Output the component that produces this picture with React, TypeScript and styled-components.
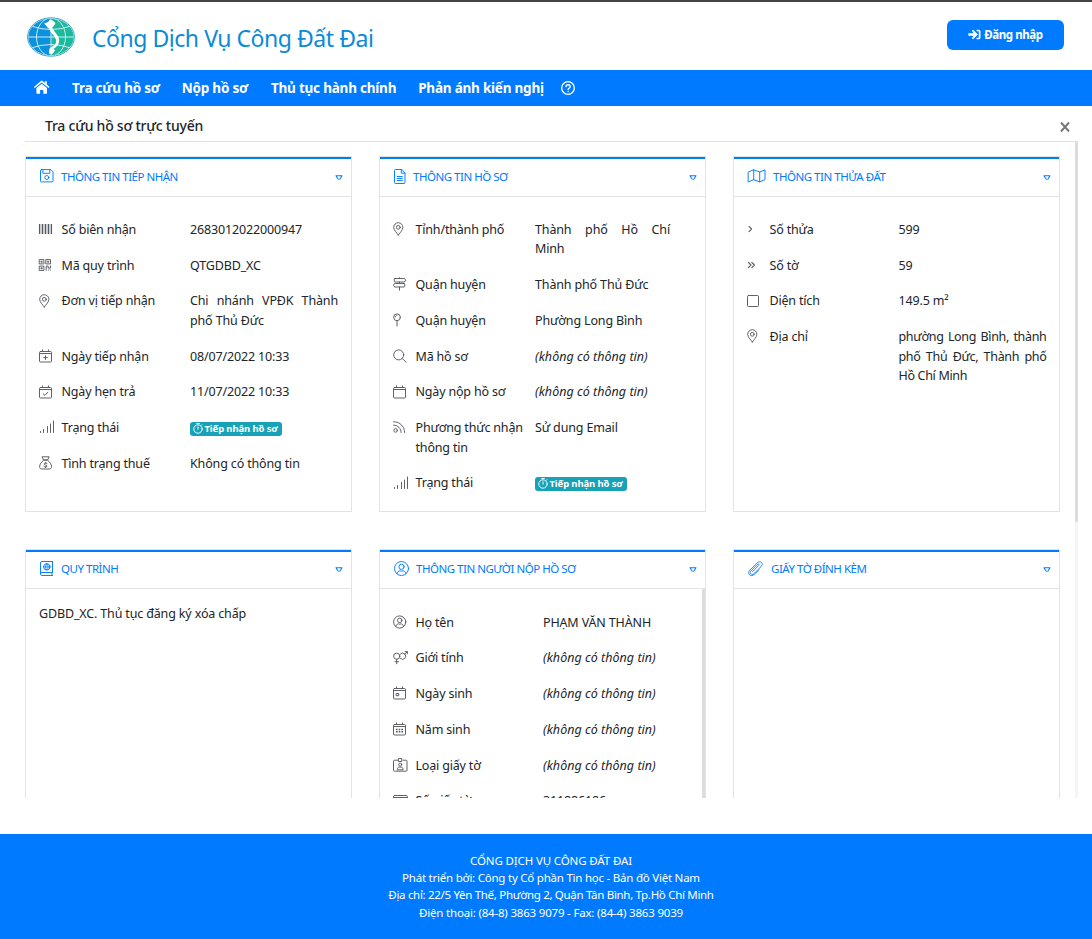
import React from "react";
import styled, { createGlobalStyle, css } from "styled-components";

const BLUE = "#007bff";
const LINE = "#e1e3e5";

const GlobalStyle = createGlobalStyle`
  *, *::before, *::after { box-sizing: border-box; }
  body {
    margin: 0;
    background: #fff;
    color: #212529;
    font-family: "Noto Sans", "Open Sans", sans-serif;
    font-size: 12.5px;
    letter-spacing: -0.15px;
  }
`;

/* ---------- page frame ---------- */

const Page = styled.div`
  display: flex;
  flex-direction: column;
  width: 1092px;
  height: 939px;
  overflow: hidden;
  border-top: 2px solid #444;
`;

const Header = styled.header`
  display: flex;
  align-items: center;
  height: 68px;
  flex: none;
  padding: 2px 28px 0 27px;
`;

const Brand = styled.h1`
  margin: 1px 0 0 17px;
  color: #0a8ad8;
  font-size: 23px;
  font-weight: 400;
  line-height: 30px;
  letter-spacing: -0.46px;
`;

const LoginButton = styled.button`
  display: flex;
  align-items: center;
  justify-content: center;
  gap: 3px;
  width: 117px;
  height: 30px;
  margin: 0 0 4px auto;
  padding: 0 0 1px;
  border: 0;
  border-radius: 6px;
  background: ${BLUE};
  color: #fff;
  font: 700 11.5px "Noto Sans", sans-serif;
  letter-spacing: -0.42px;
`;

const Nav = styled.nav`
  display: flex;
  align-items: center;
  height: 36px;
  flex: none;
  padding-left: 33px;
  background: ${BLUE};
  color: #fff;
`;

const NavLink = styled.a<{ $gap: number }>`
  margin-left: ${(p) => p.$gap}px;
  font-size: 13.5px;
  font-weight: 700;
  line-height: 36px;
  letter-spacing: -0.22px;
  white-space: nowrap;
`;

const Main = styled.main`
  display: flex;
  flex-direction: column;
  height: 728px;
  flex: none;
  padding: 0 14px 36px 25px;
`;

const TitleBar = styled.div`
  display: flex;
  align-items: center;
  justify-content: space-between;
  height: 36px;
  flex: none;
  padding: 5px 8px 0 20px;
  border-bottom: 1px solid #dfe1e3;
`;

const PageTitle = styled.h2`
  margin: 0;
  font-size: 14px;
  font-weight: 500;
  line-height: 20px;
  letter-spacing: -0.24px;
`;

const CloseButton = styled.span`
  display: flex;
  color: #777;
  padding-top: 1px;
`;

const Scroller = styled.div`
  display: flex;
  flex: 1;
  min-height: 0;
  overflow: hidden;
`;

const CardGrid = styled.div`
  display: grid;
  grid-template-columns: repeat(3, 327px);
  grid-template-rows: 356px 356px;
  gap: 37px 27px;
  padding-top: 14px;
`;

const Track = styled.div<{ $thumb: string }>`
  width: 3px;
  height: 100%;
  margin-left: auto;
  background: #f5f5f5;
  &::before {
    content: "";
    display: block;
    height: ${(p) => p.$thumb};
    background: #dcdcdc;
    border-radius: 1px;
  }
`;

const Footer = styled.footer`
  display: flex;
  flex-direction: column;
  align-items: center;
  height: 105px;
  flex: none;
  padding: 17.6px 0 0 10px;
  background: ${BLUE};
  color: #fff;
`;

const FooterLine = styled.p<{ $track: number }>`
  margin: 0;
  font-size: 11.5px;
  line-height: 17.4px;
  letter-spacing: ${(p) => p.$track}px;
`;

/* ---------- cards ---------- */

const Card = styled.section`
  display: flex;
  flex-direction: column;
  border: 1px solid ${LINE};
  overflow: hidden;
`;

const CardHeader = styled.header<{ $height: number }>`
  display: flex;
  align-items: center;
  height: ${(p) => p.$height}px;
  flex: none;
  padding: 0 8px ${(p) => (p.$height < 40 ? 4 : 3)}px 14px;
  border-top: 2px solid ${BLUE};
  border-bottom: 1px solid ${LINE};
  color: ${BLUE};
`;

const CardTitle = styled.h3<{ $gap: number }>`
  margin: 2px auto 0 ${(p) => p.$gap}px;
  font-size: 11.5px;
  font-weight: 400;
  line-height: 18px;
  letter-spacing: -0.48px;
  white-space: nowrap;
`;

const Toggle = styled.span`
  display: flex;
  padding-top: 3px;
`;

const CardBody = styled.div`
  display: flex;
  flex: 1;
  min-height: 0;
`;

const Note = styled.p`
  margin: 15px 13px;
  line-height: 19.5px;
`;

const FieldList = styled.dl<{ $top: number; $label: number; $value: number }>`
  display: grid;
  grid-template-columns: 22.5px ${(p) => p.$label}px ${(p) => p.$value}px;
  row-gap: 16.25px;
  align-content: start;
  margin: 0;
  padding: ${(p) => p.$top}px 0 0 13px;
  line-height: 19.5px;
`;

const IconCell = styled.span`
  display: flex;
  align-items: center;
  height: 18.5px;
  color: #555b61;
`;

const Label = styled.dt`
  padding-right: 8px;
  letter-spacing: -0.18px;
`;

const Value = styled.dd<{ $empty?: boolean; $tight?: boolean }>`
  margin: 0;
  text-align: justify;
  ${(p) =>
    p.$tight &&
    css`
      letter-spacing: -0.32px;
    `}
  ${(p) =>
    p.$empty &&
    css`
      font-style: italic;
      letter-spacing: 0.03px;
    `}
`;

const Badge = styled.span`
  display: inline-flex;
  align-items: center;
  gap: 1.5px;
  width: 92px;
  height: 14px;
  margin-top: 3.5px;
  padding: 0 0 0 3px;
  border-radius: 3px;
  background: #17a2b8;
  color: #fff;
  font-size: 9.5px;
  font-weight: 700;
  line-height: 14px;
  letter-spacing: -0.12px;
  white-space: nowrap;
  vertical-align: top;
`;

/* ---------- icons ---------- */

const Glyph = styled.svg`
  display: block;
  flex: none;
  overflow: visible;
  fill: none;
  stroke: currentColor;
  stroke-width: 0.95;
  stroke-linecap: round;
  stroke-linejoin: round;
`;

const calendarFrame = (
  <path d="M1.5 2.5h10a1 1 0 0 1 1 1v8.500a1 1 0 0 1-1 1h-10a1 1 0 0 1-1-1V3.500a1 1 0 0 1 1-1zM.5 4.500h12M3.500.9v1.600M9.500.9v1.600" />
);

const drawings: Record<string, React.ReactNode> = {
  barcode: (
    <>
      <path
        d="M.5 2v10M3.500 2v10M6.500 2v10M9.500 2v10M12.500 2v10"
        strokeLinecap="butt"
        strokeWidth="1.100"
      />
      <path d="M2 2v10M5 2v10M8 2v10M11 2v10" strokeLinecap="butt" opacity=".55" />
    </>
  ),
  qr: (
    <>
      <path d="M.6 1.600h4.300v4.300H.6zM7.200 1.600h4.300v4.300H7.200zM.6 8.100h4.300v4.300H.6zM7.200 12.400V8.100h2v2h2.300V8" />
      <path d="M2.300 3.300h.9v.9h-.9zM8.900 3.300h.9v.9h-.9zM2.300 9.800h.9v.9h-.9zM9.500 12h.3M11.500 12h.1" />
    </>
  ),
  pin: (
    <>
      <path d="M5.300 13C4.500 11.500.7 8.300.7 5.300a4.600 4.600 0 0 1 9.200 0c0 3-3.800 6.200-4.600 7.700z" />
      <circle cx="5.300" cy="5.300" r="1.900" />
    </>
  ),
  calPlus: (
    <>
      {calendarFrame}
      <path d="M6.500 6.700v3.800M4.600 8.600h3.800" />
    </>
  ),
  calCheck: (
    <>
      {calendarFrame}
      <path d="M4.200 8.800l1.700 1.600 3-3.200" />
    </>
  ),
  calendar: calendarFrame,
  calDay: (
    <>
      {calendarFrame}
      <path d="M3.500 7.500h2.200v2.200H3.500z" />
    </>
  ),
  calGrid: (
    <>
      {calendarFrame}
      <path
        d="M3 7.500h1.600M5.700 7.500h1.600M8.400 7.500H10M3 9.800h1.600M5.700 9.800h1.600M8.400 9.800H10"
        strokeWidth="1.500"
        strokeLinecap="butt"
      />
    </>
  ),
  signal: (
    <path d="M1.500 12.500v-1M4.500 12.500v-3M8.500 12.500v-6M11.500 12.500V4M14.500 12.500V1" />
  ),
  moneyBag: (
    <>
      <path d="M4.400 3.600 3 .8h7.200L8.800 3.600zM4.400 4.400C2.500 6 .6 8.300.6 10.700c0 1.400.8 2.300 2.200 2.300h7.600c1.400 0 2.200-.9 2.200-2.300 0-2.400-1.900-4.700-3.800-6.300z" />
      <path d="M8 7.500c-1.100-.7-2.800-.4-2.800.6 0 1.300 2.900.7 2.900 2 0 1-1.800 1.200-3 .5M6.600 6.500v.6M6.600 11v.6" />
    </>
  ),
  signs: (
    <path d="M6.500.7v.8M6.500 5v1.500M6.500 10v3.200M2 1.500h9.500l1.200 1.700L11.500 5H2a.7.7 0 0 1-.7-.7V2.200a.7.7 0 0 1 .7-.7zM11 6.500H1.600L.5 8.200 1.600 10H11a.7.7 0 0 0 .7-.7V7.200a.7.7 0 0 0-.7-.7z" />
  ),
  mapPin: (
    <>
      <circle cx="4" cy="4.300" r="3.400" />
      <path d="M4 7.700V13M2.200 4.100c0-.9.700-1.600 1.600-1.600" />
    </>
  ),
  search: (
    <>
      <circle cx="5.700" cy="5.900" r="5" />
      <path d="M9.400 9.600 13 13.200" />
    </>
  ),
  rss: (
    <>
      <path d="M.6 1.700c6.300 0 11 4.700 11 10.800M.6 5.100c4.200 0 7.500 3.200 7.500 7.400" />
      <circle cx="2.600" cy="10.400" r="1.800" />
    </>
  ),
  angle: <path d="M2 4.400 4.600 7 2 9.600" strokeWidth="1.100" />,
  angles: <path d="M1.400 4.400 4 7 1.400 9.600M4.800 4.400 7.400 7 4.800 9.600" strokeWidth="1.100" />,
  square: <rect x=".5" y="1.500" width="11" height="11" rx="1" />,
  user: (
    <>
      <circle cx="6.700" cy="7" r="6.100" />
      <circle cx="6.700" cy="5.400" r="2.200" />
      <path d="M2.800 11.400c.4-1.700 1.500-2.500 2.700-2.500.8.300 1.600.3 2.400 0 1.200 0 2.300.8 2.700 2.500" />
    </>
  ),
  userLarge: (
    <>
      <circle cx="7.500" cy="7.500" r="7" />
      <circle cx="7.500" cy="5.800" r="2.600" />
      <path d="M3 12.700c.4-2 1.700-2.900 3.100-2.900.9.300 1.900.3 2.800 0 1.400 0 2.700.9 3.100 2.900" />
    </>
  ),
  gender: (
    <>
      <circle cx="3.700" cy="5.200" r="3.100" />
      <path d="M3.700 8.300v4.500M1.900 10.700h3.600M11.600 3.300 14.200.8M12.200.6h2.200v2.200" />
      <path d="M7.300 3.100a3.100 3.100 0 1 1 0 4.200" />
    </>
  ),
  idBadge: (
    <>
      <path d="M4.500 2.200H1.500a1 1 0 0 0-1 1v9a1 1 0 0 0 1 1h11.500a1 1 0 0 0 1-1v-9a1 1 0 0 0-1-1h-3M5.800.5h2.900v3H5.800z" />
      <circle cx="7.200" cy="6.600" r="1.500" />
      <path d="M4.300 11.400c0-1.600 1-2.300 2-2.300h1.800c1 0 2 .7 2 2.300z" />
    </>
  ),
  idCard: (
    <path d="M1.500 1.500h11.800a1 1 0 0 1 1 1v9a1 1 0 0 1-1 1H1.500a1 1 0 0 1-1-1v-9a1 1 0 0 1 1-1zM.5 3.500h13.800" />
  ),
  save: (
    <>
      <path d="M1.500.6h9.300l2.200 2.200v9.100a1 1 0 0 1-1 1H1.500a1 1 0 0 1-1-1V1.600a1 1 0 0 1 1-1zM2.900.8v3.500h6.900V.8" />
      <circle cx="6.800" cy="8.500" r="2" />
    </>
  ),
  file: (
    <path d="M7.300.5H1.500a1 1 0 0 0-1 1v12a1 1 0 0 0 1 1h8.500a1 1 0 0 0 1-1V4.200zM7.300.5v3.700H11M3.200 7.500h5.100M3.200 9.500h5.100M3.200 11.500h5.100" />
  ),
  map: (
    <path d="M.5 3 5.700.8l6 2.200L17 .9v9.700l-5.300 2.300-6-2.200L.5 12.800zM5.700.8v9.900M11.700 3v9.900" />
  ),
  atlas: (
    <>
      <path d="M12.500.5H2A1.500 1.500 0 0 0 .5 2v10.500A1.500 1.500 0 0 0 2 14.500h10.500M12.500.5v11H2A1.500 1.500 0 0 0 .5 12.800M12 11.500v3" />
      <circle cx="6.800" cy="5.900" r="3.200" />
      <path d="M3.600 5.900H10M6.800 2.700c-1.700 1.900-1.700 4.500 0 6.400 1.700-1.900 1.700-4.500 0-6.400z" strokeWidth=".8" />
    </>
  ),
  clip: (
    <path d="M4.600 10.600 10.600 4.500c1-.9 0-2.200-1-1.200L3 9.900c-2.200 2.300.6 5 2.900 2.800l7.100-7c3.200-3.200-.7-7-4-3.700L2 8.900c-3.600 3.700.7 8 4.600 4.300l4.500-4.400" strokeWidth=".85" />
  ),
  caret: <path d="M1 .7h6L5.200 3.700a1.500 1.500 0 0 1-2.400 0z" strokeWidth="1.050" />,
  timer: (
    <>
      <circle cx="5" cy="6" r="4.200" />
      <path d="M5 3.800V6.300M3.700.5h2.600M8.300 2.300l.5-.5" />
    </>
  ),
  help: (
    <>
      <circle cx="7" cy="7" r="6.300" strokeWidth="1.300" />
      <path d="M5 5.600c.1-2.600 4.200-2.300 4.100.1 0 1.500-2 1.500-2 2.800M7.100 10.400v.1" strokeWidth="1.400" />
    </>
  ),
  close: <path d="M1 .5 9 9.500M9 .5 1 9.500" strokeWidth="1.900" strokeLinecap="butt" />,
};

function Icon({ name, w = 14, h = 14 }: { name: string; w?: number; h?: number }) {
  return (
    <Glyph width={w} height={h} viewBox={`0 0 ${w} ${h}`} aria-hidden>
      {drawings[name]}
    </Glyph>
  );
}

function HomeIcon() {
  return (
    <svg width="17" height="16" viewBox="0 0 17 16" fill="#fff" aria-hidden>
      <path d="M8.200.7a.9.900 0 0 1 1 0l2.600 2.200V1.200h2v3.400l2.700 2.300-.9 1.100-6.900-5.600-6.900 5.600-.9-1.100z" />
      <path d="M8.700 3.800 14 8.100v5a.6.600 0 0 1-.6.600H10.300V9.900H7.100v3.800H4a.6.600 0 0 1-.6-.6v-5z" />
    </svg>
  );
}

function LoginIcon() {
  return (
    <svg width="13" height="11" viewBox="0 0 13 11" fill="#fff" aria-hidden>
      <path d="M5.100.7 9.900 5.500 5.100 10.300 3.800 9.200 5.500 6.700H.4V4.300h5.100L3.800 1.800z" />
      <path d="M8.600.7h2a1.900 1.900 0 0 1 1.900 1.900v5.800a1.900 1.900 0 0 1-1.900 1.900h-2V8.700h1.700a.5.500 0 0 0 .5-.5V2.800a.5.500 0 0 0-.5-.5H8.600z" />
    </svg>
  );
}

function Logo() {
  return (
    <svg width="48" height="40" viewBox="0 0 48 40" aria-hidden>
      <defs>
        <clipPath id="globe">
          <ellipse cx="24" cy="20" rx="22.700" ry="18.500" />
        </clipPath>
      </defs>
      <ellipse cx="24" cy="20" rx="23.400" ry="19.200" fill="#fff" stroke="#3aa0d4" strokeWidth="1" />
      <g clipPath="url(#globe)">
        <rect width="25" height="40" fill="#0b92dc" />
        <rect x="25" width="23" height="40" fill="#1cba9c" />
        <g fill="none" stroke="#dff6fb" strokeWidth=".9">
          <ellipse cx="24" cy="20" rx="14.500" ry="19" />
          <path d="M24 0v40M0 20h48M4 9q20 7 40 0M4 31q20-7 40 0" />
        </g>
        <path
          d="M17 6.500 21 5l2-2.500 3 1.300L28.500 6l-1 2-2.200 2.500c.6 3 5.500 6.500 6.700 11.500.8 4.500-1.700 7.500-5 9.500l-3.700 3.500-.8-3.500 3.500-2.500c2.500-1 3.500-3.500 3-6.500C27.500 18 23 15.500 22.500 12l-2-1.500-1.500-2z"
          fill="#fff"
        />
        <path d="M22 32.500 27 32l1 1.500-3 4-3-1z" fill="#fff" />
      </g>
    </svg>
  );
}

/* ---------- content ---------- */

type Field = { icon: string; label: string; value?: string; status?: boolean; tight?: boolean };

const receipt: Field[] = [
  { icon: "barcode", label: "Số biên nhận", value: "2683012022000947" },
  { icon: "qr", label: "Mã quy trình", value: "QTGDBD_XC" },
  { icon: "pin", label: "Đơn vị tiếp nhận", value: "Chi nhánh VPĐK Thành phố Thủ Đức" },
  { icon: "calPlus", label: "Ngày tiếp nhận", value: "08/07/2022 10:33" },
  { icon: "calCheck", label: "Ngày hẹn trả", value: "11/07/2022 10:33" },
  { icon: "signal", label: "Trạng thái", status: true },
  { icon: "moneyBag", label: "Tình trạng thuế", value: "Không có thông tin" },
];

const dossier: Field[] = [
  { icon: "pin", label: "Tỉnh/thành phố", value: "Thành phố Hồ Chí Minh" },
  { icon: "signs", label: "Quận huyện", value: "Thành phố Thủ Đức" },
  { icon: "mapPin", label: "Quận huyện", value: "Phường Long Bình" },
  { icon: "search", label: "Mã hồ sơ" },
  { icon: "calendar", label: "Ngày nộp hồ sơ" },
  { icon: "rss", label: "Phương thức nhận thông tin", value: "Sử dung Email" },
  { icon: "signal", label: "Trạng thái", status: true },
];

const parcel: Field[] = [
  { icon: "angle", label: "Số thửa", value: "599" },
  { icon: "angles", label: "Số tờ", value: "59" },
  { icon: "square", label: "Diện tích", value: "149.5 m²" },
  {
    icon: "pin",
    label: "Địa chỉ",
    value: "phường Long Bình, thành phố Thủ Đức, Thành phố Hồ Chí Minh",
    tight: true,
  },
];

const applicant: Field[] = [
  { icon: "user", label: "Họ tên", value: "PHẠM VĂN THÀNH" },
  { icon: "gender", label: "Giới tính" },
  { icon: "calDay", label: "Ngày sinh" },
  { icon: "calGrid", label: "Năm sinh" },
  { icon: "idBadge", label: "Loại giấy tờ" },
  { icon: "idCard", label: "Số giấy tờ", value: "311886186" },
];

function Fields({
  items,
  label,
  value,
  top = 22.75,
}: {
  items: Field[];
  label: number;
  value: number;
  top?: number;
}) {
  return (
    <FieldList $top={top} $label={label} $value={value}>
      {items.map((f, i) => (
        <React.Fragment key={i}>
          <IconCell>
            <Icon name={f.icon} />
          </IconCell>
          <Label>{f.label}</Label>
          {f.status ? (
            <Value>
              <Badge>
                <Icon name="timer" w={10} h={11} />
                Tiếp nhận hồ sơ
              </Badge>
            </Value>
          ) : (
            <Value $empty={!f.value} $tight={f.tight}>
              {f.value ?? "(không có thông tin)"}
            </Value>
          )}
        </React.Fragment>
      ))}
    </FieldList>
  );
}

function Panel({
  icon,
  iconW = 14,
  iconH = 14,
  gap = 7,
  title,
  height = 40,
  children,
}: {
  icon: string;
  iconW?: number;
  iconH?: number;
  gap?: number;
  title: string;
  height?: number;
  children?: React.ReactNode;
}) {
  return (
    <Card>
      <CardHeader $height={height}>
        <Icon name={icon} w={iconW} h={iconH} />
        <CardTitle $gap={gap}>{title}</CardTitle>
        <Toggle>
          <Icon name="caret" w={8} h={5} />
        </Toggle>
      </CardHeader>
      <CardBody>{children}</CardBody>
    </Card>
  );
}

export default function App() {
  return (
    <>
      <GlobalStyle />
      <Page>
        <Header>
          <Logo />
          <Brand>Cổng Dịch Vụ Công Đất Đai</Brand>
          <LoginButton>
            <LoginIcon />
            Đăng nhập
          </LoginButton>
        </Header>
        <Nav>
          <HomeIcon />
          <NavLink $gap={22}>Tra cứu hồ sơ</NavLink>
          <NavLink $gap={22}>Nộp hồ sơ</NavLink>
          <NavLink $gap={23}>Thủ tục hành chính</NavLink>
          <NavLink $gap={22}>Phản ánh kiến nghị</NavLink>
          <NavLink $gap={17.5}>
            <Icon name="help" />
          </NavLink>
        </Nav>
        <Main>
          <TitleBar>
            <PageTitle>Tra cứu hồ sơ trực tuyến</PageTitle>
            <CloseButton>
              <Icon name="close" w={10} h={10} />
            </CloseButton>
          </TitleBar>
          <Scroller>
            <CardGrid>
              <Panel icon="save" title="THÔNG TIN TIẾP NHẬN">
                <Fields items={receipt} label={128.500} value={148} />
              </Panel>
              <Panel icon="file" iconW={12} iconH={15} title="THÔNG TIN HỒ SƠ">
                <Fields items={dossier} label={119.500} value={135} />
              </Panel>
              <Panel icon="map" iconW={18} title="THÔNG TIN THỬA ĐẤT">
                <Fields items={parcel} label={129} value={148} />
              </Panel>
              <Panel icon="atlas" iconH={15} height={39} title="QUY TRÌNH">
                <Note>GDBD_XC. Thủ tục đăng ký xóa chấp</Note>
              </Panel>
              <Panel icon="userLarge" iconW={15} iconH={15} height={39} title="THÔNG TIN NGƯỜI NỘP HỒ SƠ">
                <Fields items={applicant} label={127.500} value={130} top={23.500} />
                <Track $thumb="100%" />
              </Panel>
              <Panel icon="clip" iconW={15} iconH={15} gap={8} height={39} title="GIẤY TỜ ĐÍNH KÈM" />
            </CardGrid>
            <Track $thumb="380px" />
          </Scroller>
        </Main>
        <Footer>
          <FooterLine $track={-0.13}>CỔNG DỊCH VỤ CÔNG ĐẤT ĐAI</FooterLine>
          <FooterLine $track={-0.23}>Phát triển bởi: Công ty Cổ phần Tin học - Bản đồ Việt Nam</FooterLine>
          <FooterLine $track={-0.31}>
            Địa chỉ: 22/5 Yên Thế, Phường 2, Quận Tân Bình, Tp.Hồ Chí Minh
          </FooterLine>
          <FooterLine $track={-0.19}>Điện thoại: (84-8) 3863 9079 - Fax: (84-4) 3863 9039</FooterLine>
        </Footer>
      </Page>
    </>
  );
}
